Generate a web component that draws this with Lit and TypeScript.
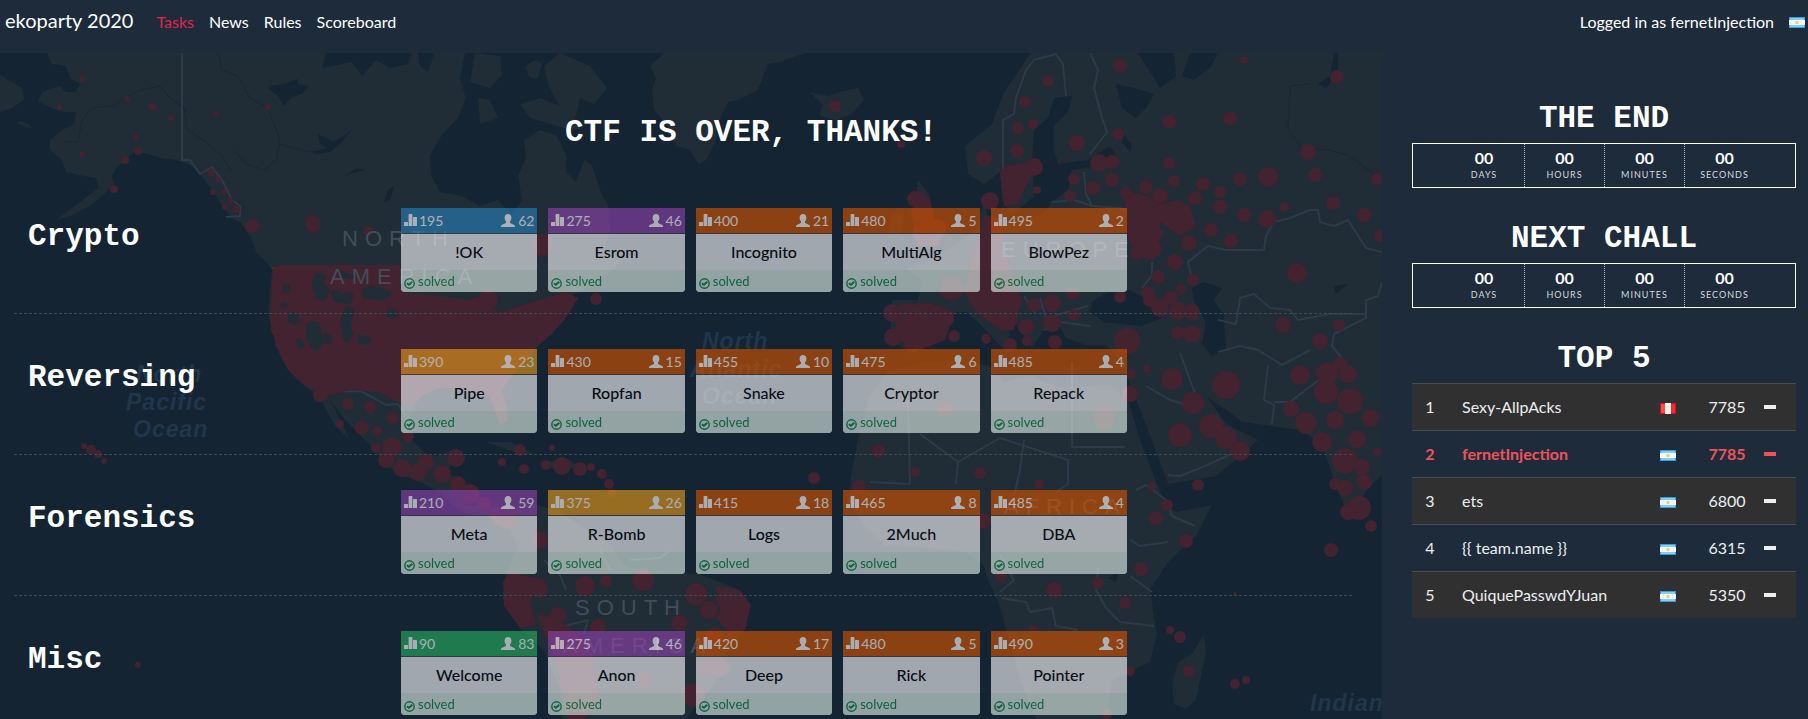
import { LitElement, html, css, svg } from "lit";
import { customElement, property } from "lit/decorators.js";

type Task = [points: number, solves: number, name: string, tone: string];

const CATEGORIES: { name: string; tasks: Task[] }[] = [
  {
    name: "Crypto",
    tasks: [
      [195, 62, "!OK", "blue"],
      [275, 46, "Esrom", "purple"],
      [400, 21, "Incognito", "orange"],
      [480, 5, "MultiAlg", "orange"],
      [495, 2, "BlowPez", "orange"],
    ],
  },
  {
    name: "Reversing",
    tasks: [
      [390, 23, "Pipe", "yellow"],
      [430, 15, "Ropfan", "orange"],
      [455, 10, "Snake", "orange"],
      [475, 6, "Cryptor", "orange"],
      [485, 4, "Repack", "orange"],
    ],
  },
  {
    name: "Forensics",
    tasks: [
      [210, 59, "Meta", "purple"],
      [375, 26, "R-Bomb", "yellow"],
      [415, 18, "Logs", "orange"],
      [465, 8, "2Much", "orange"],
      [485, 4, "DBA", "orange"],
    ],
  },
  {
    name: "Misc",
    tasks: [
      [90, 83, "Welcome", "green"],
      [275, 46, "Anon", "purple"],
      [420, 17, "Deep", "orange"],
      [480, 5, "Rick", "orange"],
      [490, 3, "Pointer", "orange"],
    ],
  },
];

const TEAMS = [
  { name: "Sexy-AllpAcks", country: "pe", score: 7785 },
  { name: "fernetInjection", country: "ar", score: 7785, mine: true },
  { name: "ets", country: "ar", score: 6800 },
  { name: "{{ team.name }}", country: "ar", score: 6315 },
  { name: "QuiquePasswdYJuan", country: "ar", score: 5350 },
];

const flag = (country: string) =>
  country === "pe"
    ? svg`<svg class="flag" width="16" height="11" viewBox="0 0 16 11" role="img" aria-label="Peru">
        <rect width="16" height="11" fill="#d9101c"/><rect x="1" y="1" width="14" height="9" fill="#ff4a4d"/>
        <rect x="5" width="6" height="11" fill="#f4f1f0"/><rect x="11" y="1" width="4" height="9" fill="#ef2a30"/></svg>`
    : svg`<svg class="flag" width="16" height="11" viewBox="0 0 16 11" role="img" aria-label="Argentina">
        <rect width="16" height="11" fill="#35a0e0"/><rect x="1" y="1" width="14" height="9" fill="#86ccf5"/>
        <rect y="3" width="16" height="5" fill="#f2f7fa"/><circle cx="8" cy="5.5" r="1.7" fill="#ecd35a"/></svg>`;

const statsIcon = svg`<svg width="13" height="13" viewBox="0 0 13 13" aria-hidden="true">
  <path fill="currentColor" d="M0 8.600q0-.6.6-.6h2.800q.6 0 .6.600V12H0zM4.600.6q0-.6.6-.6h2.600q.6 0 .6.600V12H4.600zM9 3.600q0-.6.6-.6h2.800q.6 0 .6.600V12H9z"/></svg>`;
const userIcon = svg`<svg width="14" height="13" viewBox="0 0 14 13" aria-hidden="true">
  <path fill="currentColor" d="M7 0C9.100 0 10.400 1.500 10.400 3.700c0 1.500-.5 2.800-1.400 3.600v1c0 .6.400.8 1 1.100l2.900 1.400c.7.3 1.100.8 1.100 1.500v.7H0v-.7c0-.7.400-1.200 1.100-1.500L4 9.400c.6-.3 1-.5 1-1.100v-1C4.100 6.500 3.600 5.200 3.600 3.700 3.600 1.500 4.900 0 7 0z"/></svg>`;
const checkIcon = svg`<svg class="check" width="11" height="11" viewBox="0 0 11 11" aria-hidden="true">
  <circle cx="5.500" cy="5.500" r="4.700" fill="none" stroke="currentColor" stroke-width="1.400"/>
  <path fill="none" stroke="currentColor" stroke-width="2" d="M2.900 5.200l2 1.500L8.300 3.800"/></svg>`;

const LAND = [
  // North and Central America
  "M47 53L52 64 66 66 70 78 80 84 76 92 66 92 60 86 42 92 38 102 52 108 64 112 76 112 74 124 62 130 50 140 50 150 62 160 66 172 84 176 96 178 98 188 80 202 66 212 56 220 70 216 90 206 104 194 114 184 112 176 118 166 128 158 134 152 148 154 160 158 176 160 190 165 200 174 212 190 222 206 232 218 240 222 250 236 256 252 266 262 272 270 270 290 268 315 276 345 283 362 295 378 312 392 322 402 334 424 350 440 340 420 330 400 345 420 360 435 374 450 385 464 400 475 420 482 440 492 452 504 462 512 478 516 492 508 480 505 466 505 460 490 462 478 446 474 455 460 452 450 436 456 424 452 412 440 408 425 414 405 425 392 445 386 470 386 486 388 496 410 504 424 508 408 500 386 512 370 532 350 545 330 556 312 572 296 586 288 600 280 612 270 622 260 604 250 610 230 608 205 600 190 592 165 584 160 576 182 566 172 566 155 556 135 540 130 524 140 526 158 518 176 522 200 512 215 498 200 480 206 462 196 440 192 431 175 430 155 442 135 458 118 466 98 460 78 465 53z",
  // Arctic islands
  "M475 53L500 56 502 75 490 88 470 82zM478 98L490 100 498 118 480 124zM526 66q10-10 16-2l-4 14q-12 2-12-12zM560 53L590 66 607 88 594 104 580 98 576 116 566 118 556 100 548 84 544 66zM520 104L540 98 570 110 582 130 564 128 530 118z",
  // Greenland and Iceland
  "M664 53L805 53 780 62 768 64 758 90 738 100 728 102 718 122 716 140 706 160 698 164 690 150 676 146 668 126 654 110 652 90 656 78 650 66zM810 92L828 96 840 92 858 88 864 100 852 114 836 120 820 116 822 104z",
  "M0 75L22 88 24 100 12 108 0 112zM16 122q10-2 16 6q-8 0-16-6z",
  // South America and Caribbean
  "M478 514L498 503 512 508 535 504 560 512 585 528 612 546 624 566 660 572 700 574 740 590 750 606 746 628 726 650 716 682 692 712 686 719H562L560 690 545 652 520 628 502 598 506 572 518 548 506 520zM486 442L510 442 534 454 520 454zM540 462L570 460 580 468 548 468z",
  // Africa and Madagascar
  "M868 398L858 440 852 470 848 500 864 526 886 546 930 548 965 552 984 566 988 580 1000 606 1010 645 1020 680 1036 719H1106L1112 680 1150 662 1157 635 1150 590 1168 562 1196 536 1212 505 1176 512 1164 502 1140 440 1128 400 1110 385 1062 388 1030 376 1004 382 990 366 960 360 920 362 888 372zM1204 634L1206 652 1196 700 1186 709 1174 704 1172 684 1178 662 1192 654z",
  // Eurasia
  "M1030 53H1382V475L1366 490 1358 514 1345 508 1334 480 1322 444 1300 430 1270 426 1232 420 1210 400 1226 424 1258 440 1240 456 1216 476 1168 484 1148 430 1130 384 1120 360 1106 345 1086 345 1066 338 1050 310 1044 330 1032 348 1014 320 1000 310 1010 334 1004 350 980 324 966 312 940 312 934 334 910 352 890 340 892 300 918 300 922 282 906 268 926 262 950 248 976 230 984 200 988 215 1010 222 1040 216 1050 205 1044 190 1030 200 1012 215 1002 200 1000 172 984 184 968 174 965 146 992 124 1004 92 1022 66z",
  "M918 180L930 196 936 226 942 240 918 244 912 220zM892 212L904 214 902 234 888 234z",
];

const WATER = [
  "M1054 98L1072 96 1068 112 1054 126 1054 150 1058 164 1088 160 1110 146 1116 156 1098 166 1072 170 1068 190 1052 202 1034 196 1032 160 1034 130 1048 118z",
  "M1138 53H1174L1176 76 1160 88 1150 72zM1190 53H1218L1210 68 1194 80 1182 76zM1116 84L1134 88 1154 94 1146 108 1136 118 1122 108zM1124 134L1132 146 1130 152 1122 142z",
  "M1092 302L1108 292 1130 290 1160 306 1162 318 1140 326 1104 322 1090 312zM1192 288L1204 282 1222 288 1214 300 1224 316 1226 350 1212 356 1202 344 1206 322 1194 302zM1208 398L1224 420 1242 422 1232 414zM1334 53H1338V74L1326 88 1318 84 1330 76z",
  "M268 86L284 84 298 79 297 84 309 86 302 94 292 97 284 106 278 96 272 92zM310 152L328 148 320 144 318 134 334 142 352 130 340 144 330 152 316 154zM342 178L356 168 366 170 352 173zM388 190L394 186 390 200 384 202zM326 53L412 53 408 64 390 68 376 60 362 76 352 62 322 68z",
  "M418 53H434L428 72 420 66zM440 310L456 302 470 308 462 320 454 314 450 330zM1108 578L1118 572 1116 582zM1334 286L1348 284 1336 294z",
];

const RED_AREAS = [
  "M273 267L280 265 400 265 402 292 440 296 470 300 500 312 520 306 540 300 566 292 578 298 566 318 552 334 538 346 526 360 510 378 502 390 508 420 500 426 490 396 462 388 440 388 424 394 412 406 398 402 378 392 350 390 326 396 306 386 288 370 276 346 270 320z",
  "M1124 190L1148 196 1160 205 1176 200 1190 206 1196 226 1180 236 1160 222 1160 238 1154 260 1140 258 1128 240zM984 215L1000 220 1010 270 1022 300 1014 330 1000 330 976 312 964 292 972 260zM1000 172L1008 165 1030 163 1034 172 1024 190 1018 204 1004 206z",
  "M896 306L930 303 955 312 945 340 920 350 896 340zM920 190L930 200 940 246 916 246z",
  "M504 580L520 575 545 580 530 600 536 625 520 628 504 606zM536 614L560 620 590 645 600 700 584 719 568 719 556 660zM715 586L740 590 751 605 745 630 728 632 716 618 722 606z",
];

const RED_HOLES = [
  "M314 276q6-6 12 0l-2 8q8 4 4 12t-12 2q-6-12-2-22zM330 292q8-6 12 2l10-2q4 8-4 12l-14-2zM362 290q10-8 20-2l10 4q-4 10-14 8t-16-2zM346 306q8 0 8 8l-4 12q6 8 0 14t-8-6q-4-16 4-28zM336 270q14 2 20 8q-14 4-20-8zM388 308q6-2 10 6q-6 8-12 2zM358 336q8-4 14 4q-6 8-14 4z",
  "M282 286q6-6 8 2t-8 4zM288 314q6-4 10 0l2 8q-8 6-12 0zM306 324q8-6 14 0l2 10q4 4 0 12t-10 2l-6-10zM324 334q6-2 8 4t-6 6zM296 338q6 0 8 6t-6 4zM280 304q6-4 8 2q-4 6-8-2z",
];

const BORDERS = [
  "M182 53V160H190L200 174 212 167 222 180 232 200 240 206 240 216 226 217",
  "M272 268H400M327 392L360 391 374 398 386 405 398 404 406 416",
  "M1003 172V120L1014 114 1016 98 1026 70 1034 60 1056 54 1063 64 1066 96M1090 53L1098 70 1094 88 1102 118 1107 132 1090 154",
  "M1084 172L1086 194 1092 206M1052 202L1074 200 1092 206 1120 208 1138 216M1152 262L1152 275 1142 288",
  "M1310 210L1318 210 1320 222 1334 226 1348 220 1366 248 1382 252M1310 210L1290 218 1274 222 1266 236 1264 250 1226 250 1208 246 1188 262 1192 280",
  "M1382 282L1378 296 1366 300 1366 318 1334 334 1332 346 1342 358",
  "M1218 320L1236 324 1240 298 1254 294 1270 308 1290 310 1298 320 1330 314 1366 314",
  "M1218 352L1240 346 1258 350 1282 365 1310 350M1268 365L1264 400 1274 405 1272 424M1274 402H1290L1312 385 1330 372",
  "M1072 362V447H1125M1024 440L1020 470 1014 496M920 434L958 462 1000 438 1068 460V484L1056 492M958 462L956 484M908 400L910 484 870 482",
  "M1146 386L1170 400 1190 406M1168 475L1180 476 1205 466 1240 450M1180 353L1196 396",
  "M1130 540L1140 546 1168 542M1136 490L1146 485 1166 500 1172 516 1195 526M1130 576L1152 592M1098 568L1096 590 1106 608 1120 622 1154 626M1002 598L1026 602 1030 612 1052 608 1056 626 1078 630",
  "M1000 555L1014 580 1000 592M544 560L560 575 566 590M600 550L610 570M558 628L588 620 584 634M630 560L660 558 668 552",
  "M1024 296L1034 312 1050 302M1040 298L1046 318 1088 306M1044 330L1060 322 1090 326",
];

const RIVERS = [
  "M62 142L78 142 82 120 92 108 112 106 140 90 160 86 170 98 184 108 188 130 206 142 222 156 232 172",
  "M218 53L222 70 238 76 250 98 268 108 280 140 276 160 264 170 246 164 234 150M278 144L310 152",
  "M1290 86L1310 84M1290 86L1288 130 1302 148 1330 150 1350 156 1376 176",
];

const DOTS: number[][] = [
  [82, 79, 3], [59, 107, 3], [127, 99, 3], [153, 107, 4], [171, 118, 3], [136, 137, 3], [82, 154, 3], [138, 151, 4],
  [125, 160, 4], [114, 189, 4], [211, 173, 4], [218, 180, 3], [213, 192, 3], [224, 192, 3], [231, 201, 3], [236, 209, 4],
  [225, 207, 3], [216, 114, 3], [268, 107, 3], [252, 226, 7], [313, 224, 8], [368, 231, 5], [276, 330, 5],
  [320, 395, 7], [348, 404, 6], [370, 407, 6], [340, 424, 4], [362, 428, 7], [377, 431, 5], [393, 418, 6], [376, 448, 5],
  [392, 447, 10], [408, 436, 6], [386, 460, 8], [402, 468, 9], [418, 472, 9], [426, 462, 8], [442, 474, 9], [456, 458, 9],
  [458, 484, 8], [470, 494, 10], [484, 504, 7], [500, 516, 9], [507, 520, 9], [84, 446, 3], [91, 450, 5], [98, 454, 4], [104, 461, 3],
  [138, 665, 3], [542, 245, 11], [596, 299, 6], [488, 300, 10], [478, 310, 13], [520, 450, 6], [552, 448, 3], [502, 462, 4],
  [524, 469, 5], [546, 465, 5], [562, 466, 9], [580, 469, 7], [591, 467, 4], [602, 474, 5], [609, 484, 5], [612, 493, 4],
  [540, 590, 8], [539, 540, 9], [585, 586, 10], [606, 581, 6], [643, 580, 11], [515, 585, 12], [558, 615, 8], [598, 627, 8],
  [696, 594, 11], [709, 610, 9], [679, 623, 8], [727, 598, 11], [714, 636, 9], [644, 680, 8], [704, 668, 8], [693, 695, 12], [720, 668, 9],
  [645, 682, 6], [835, 106, 6], [901, 144, 4], [814, 478, 6], [915, 199, 8], [920, 212, 9], [924, 232, 11], [938, 228, 9],
  [892, 313, 9], [906, 311, 8], [893, 337, 9], [912, 345, 8], [944, 318, 10], [954, 336, 6], [952, 288, 12], [878, 451, 7], [859, 487, 7], [915, 472, 5],
  [1120, 66, 7], [1048, 81, 6], [1025, 102, 6], [1018, 128, 6], [1033, 124, 5], [1077, 143, 8], [984, 158, 8], [1017, 151, 7],
  [1034, 167, 9], [1118, 134, 6], [1169, 122, 7], [1230, 118, 7], [1244, 60, 4], [1337, 77, 7], [1308, 152, 8], [1169, 163, 6],
  [1099, 163, 9], [1112, 162, 7], [1093, 188, 7], [1112, 180, 7], [1074, 179, 6], [1070, 196, 6], [1037, 190, 4], [990, 201, 9],
  [1174, 181, 6], [1203, 184, 7], [1220, 192, 6], [1240, 179, 7], [1268, 177, 10], [1315, 175, 7], [1377, 179, 6], [1195, 198, 7],
  [1220, 207, 7], [1244, 215, 7], [1267, 219, 9], [1284, 207, 5], [1333, 203, 7], [1364, 215, 7], [1380, 236, 6], [1211, 230, 7],
  [1231, 241, 7], [1189, 243, 8], [1297, 273, 10], [1175, 262, 8], [1158, 277, 7], [1193, 280, 6], [1126, 193, 6], [1146, 187, 7],
  [1160, 196, 8], [1154, 234, 9], [1154, 249, 8], [1137, 253, 7], [1181, 289, 5], [1148, 293, 7], [1171, 298, 7], [1150, 300, 7],
  [1160, 308, 9], [1178, 311, 9], [1192, 312, 8], [1178, 333, 7], [1192, 334, 9], [1120, 297, 6], [1073, 293, 7], [1074, 315, 6],
  [1034, 305, 7], [1052, 303, 9], [1052, 323, 9], [1006, 320, 11], [1026, 327, 8], [986, 339, 5], [1027, 341, 5], [1055, 342, 7],
  [1127, 341, 13], [1010, 345, 7], [950, 290, 10], [1172, 379, 11], [1226, 385, 14], [1193, 403, 11], [1211, 426, 12],
  [1226, 438, 11], [1240, 451, 10], [1180, 435, 12], [1131, 374, 5], [1147, 369, 4], [1130, 394, 8], [1300, 375, 10],
  [1327, 374, 11], [1348, 374, 9], [1326, 392, 12], [1350, 401, 13], [1291, 409, 8], [1306, 423, 11], [1335, 420, 9], [1370, 418, 9],
  [1322, 442, 10], [1357, 439, 9], [1345, 461, 13], [1364, 482, 8], [1362, 467, 8], [1345, 488, 8], [1335, 484, 6], [1359, 508, 12],
  [1348, 512, 8], [1371, 526, 6], [1377, 452, 4], [1331, 550, 7], [1283, 325, 8], [1320, 341, 8], [1339, 325, 6], [1340, 364, 7],
  [980, 473, 6], [1039, 484, 5], [1152, 486, 4], [1198, 485, 6], [1167, 505, 6], [1156, 518, 7], [1186, 541, 7], [1141, 569, 7],
  [1098, 583, 6], [1054, 590, 8], [1125, 603, 6], [1001, 576, 6], [983, 521, 8], [1170, 630, 4], [1180, 637, 6], [1189, 671, 6],
  [1235, 684, 5], [1246, 680, 4], [1130, 671, 5], [1107, 714, 5], [1033, 629, 4], [1235, 594, 2], [945, 410, 8], [1104, 418, 11],
];

@customElement("world-map")
class WorldMap extends LitElement {
  static styles = css`
    :host { display: block; overflow: hidden; contain: size; }
    svg { display: block; width: 100%; height: 100%; }
    .water-bg { fill: #142432; }
    .land { fill: #202c36; }
    .red { fill: #42232f; }
    .borders { fill: none; stroke: #2d3a48; stroke-width: 2; stroke-linejoin: round; }
    .rivers { fill: none; stroke: #1a2631; stroke-width: 1; stroke-linejoin: round; }
    .region { font: 22px "Liberation Sans", sans-serif; letter-spacing: 7px; fill: #424e5a; }
    .ocean { font: italic bold 23px "Liberation Sans", sans-serif; letter-spacing: 1px; fill: #21364c; }
  `;

  render() {
    return html`<svg viewBox="0 53 1382 666" preserveAspectRatio="xMidYMid slice" aria-hidden="true">
      <rect class="water-bg" y="53" width="1382" height="666" />
      <g class="land">${LAND.map((d) => svg`<path d=${d} />`)}</g>
      <g class="water-bg">${WATER.map((d) => svg`<path d=${d} />`)}</g>
      <g class="rivers">${RIVERS.map((d) => svg`<path d=${d} />`)}</g>
      <g class="borders">${BORDERS.map((d) => svg`<path d=${d} />`)}</g>
      <g class="red">
        ${RED_AREAS.map((d) => svg`<path d=${d} />`)}
        ${DOTS.map(([x, y, r]) => svg`<circle cx=${x} cy=${y} r=${r} />`)}
      </g>
      <g class="land">${RED_HOLES.map((d) => svg`<path d=${d} />`)}</g>
      <g class="region">
        <text x="342" y="246">NORTH</text><text x="330" y="284">AMERICA</text>
        <text x="575" y="615">SOUTH</text><text x="563" y="653">AMERICA</text>
        <text x="1001" y="257">EUROPE</text><text x="1004" y="514">AFRICA</text>
      </g>
      <g class="ocean">
        <text x="136" y="382">North</text><text x="126" y="410">Pacific</text><text x="133" y="437">Ocean</text>
        <text x="702" y="349">North</text><text x="690" y="377">Atlantic</text><text x="702" y="404">Ocean</text>
        <text x="1310" y="711">Indian</text>
      </g>
    </svg>`;
  }
}

@customElement("task-card")
class TaskCard extends LitElement {
  @property({ attribute: false }) task!: Task;

  static styles = css`
    :host { display: block; }
    .card {
      display: block; overflow: hidden; opacity: 0.63; color: #000; text-decoration: none;
      background: #f5f5fa; border-radius: 0 0 4px 4px;
    }
    .top {
      display: flex; align-items: center; gap: 2px; height: 25px; padding: 0 3px;
      border-bottom: 1px solid #444; color: #fff; font-size: 14px; line-height: 24px;
    }
    .top .solves { display: flex; align-items: center; gap: 3px; margin-left: auto; }
    .blue { background: #2980b9; }
    .purple { background: #8e44ad; }
    .orange { background: #d35400; }
    .yellow { background: #e59a1c; }
    .green { background: #27ae60; }
    .name { padding: 6px 4px; font-size: 16px; font-weight: 500; line-height: 24px; text-align: center; }
    .state {
      display: flex; align-items: center; gap: 3px; height: 22px; padding: 0 3px;
      background: #dfeee8; color: #0a8a48; font-size: 13px; line-height: 22px;
    }
    .check { align-self: flex-end; margin-bottom: 3px; }
  `;

  render() {
    const [points, solves, name, tone] = this.task;
    return html`<a class="card" href="#">
      <div class="top ${tone}">
        ${statsIcon}<span>${points}</span>
        <span class="solves">${userIcon}<span>${solves}</span></span>
      </div>
      <div class="name">${name}</div>
      <div class="state">${checkIcon}<span>solved</span></div>
    </a>`;
  }
}

@customElement("count-down")
class CountDown extends LitElement {
  static styles = css`
    :host { display: block; }
    .box {
      display: grid; grid-template-columns: repeat(4, minmax(0, 1fr)); margin: 0; padding: 0 31px;
      border: 1px solid #fff; list-style: none;
    }
    .cell { padding: 4px 0 5px; text-align: center; }
    .cell + .cell { border-left: 1px dotted #b7bec6; }
    .value { font-size: 16px; font-weight: 700; line-height: 20px; }
    .unit { font-size: 9px; letter-spacing: 1px; line-height: 14px; color: #d5d9dd; }
  `;

  render() {
    return html`<ul class="box">
      ${["DAYS", "HOURS", "MINUTES", "SECONDS"].map(
        (unit) => html`<li class="cell"><div class="value">00</div><div class="unit">${unit}</div></li>`,
      )}
    </ul>`;
  }
}

@customElement("app-root")
class AppRoot extends LitElement {
  static styles = css`
    :host {
      display: flex; flex-direction: column; min-height: 100vh; background: #1d2b3b; color: #fff;
      font-family: Lato, sans-serif; font-size: 16px; line-height: 24px;
    }
    .bar { display: flex; align-items: center; height: 53px; padding: 0 3px 9px 5px; box-sizing: border-box; }
    .brand { margin-right: 23px; padding-bottom: 4px; font-size: 20px; line-height: 24px; }
    .nav { display: flex; gap: 15px; }
    .brand, .nav a { color: #fff; text-decoration: none; }
    .nav a.active { color: #e0254f; }
    .user { display: flex; align-items: center; gap: 15px; margin-left: auto; }
    .flag { display: block; }
    .page { display: grid; grid-template-columns: minmax(0, 1fr) 426px; flex: 1; }
    .board { display: grid; grid-template-columns: minmax(0, 1fr); }
    .board > * { grid-area: 1 / 1; }
    .content { z-index: 1; padding: 62px 30px 0 14px; }
    h1, h2 { margin: 0; font: bold 31px/36px "Liberation Mono", monospace; }
    h1 { padding-left: 136px; margin-bottom: 22px; text-align: center; }
    .category {
      display: grid; grid-template-columns: 387px minmax(0, 726px); padding: 35px 0 21px;
      border-bottom: 1px dashed #3d4a50;
    }
    .category:last-child { padding-bottom: 4px; border-bottom: 0; }
    .category h2 { padding: 11px 0 0 14px; }
    .cards { display: grid; grid-template-columns: repeat(5, minmax(0, 1fr)); gap: 11px; }
    aside { padding: 48px 12px 0 30px; }
    aside h2 { margin-bottom: 6px; text-align: center; }
    aside count-down { margin-bottom: 33px; }
    table { width: 100%; border-collapse: collapse; }
    td { height: 46px; padding: 0; border-top: 1px solid #484d52; text-align: center; color: #eceef0; }
    tr:nth-child(odd) { background: #303030; }
    .rank { width: 36px; }
    .team { padding-left: 14px; text-align: left; }
    .country { width: 40px; }
    .points { width: 108px; }
    .country .flag { margin: 2px auto 0; }
    .score { display: inline-flex; align-items: center; gap: 18px; }
    .trend { width: 12px; height: 4px; background: currentColor; }
    .mine td { color: #f0525a; font-weight: 700; }
  `;

  render() {
    return html`
      <header class="bar">
        <a class="brand" href="#">ekoparty 2020</a>
        <nav class="nav">
          <a class="active" href="#">Tasks</a><a href="#">News</a><a href="#">Rules</a><a href="#">Scoreboard</a>
        </nav>
        <div class="user"><span>Logged in as fernetInjection</span>${flag("ar")}</div>
      </header>
      <div class="page">
        <main class="board">
          <world-map></world-map>
          <div class="content">
            <h1>CTF IS OVER, THANKS!</h1>
            ${CATEGORIES.map(
              (category) => html`<section class="category">
                <h2>${category.name}</h2>
                <div class="cards">${category.tasks.map((task) => html`<task-card .task=${task}></task-card>`)}</div>
              </section>`,
            )}
          </div>
        </main>
        <aside>
          <h2>THE END</h2>
          <count-down></count-down>
          <h2>NEXT CHALL</h2>
          <count-down></count-down>
          <h2>TOP 5</h2>
          <table>
            <tbody>
              ${TEAMS.map(
                (team, i) => html`<tr class=${team.mine ? "mine" : ""}>
                  <td class="rank">${i + 1}</td>
                  <td class="team">${team.name}</td>
                  <td class="country">${flag(team.country)}</td>
                  <td class="points"><span class="score">${team.score}<span class="trend"></span></span></td>
                </tr>`,
              )}
            </tbody>
          </table>
        </aside>
      </div>
    `;
  }
}
